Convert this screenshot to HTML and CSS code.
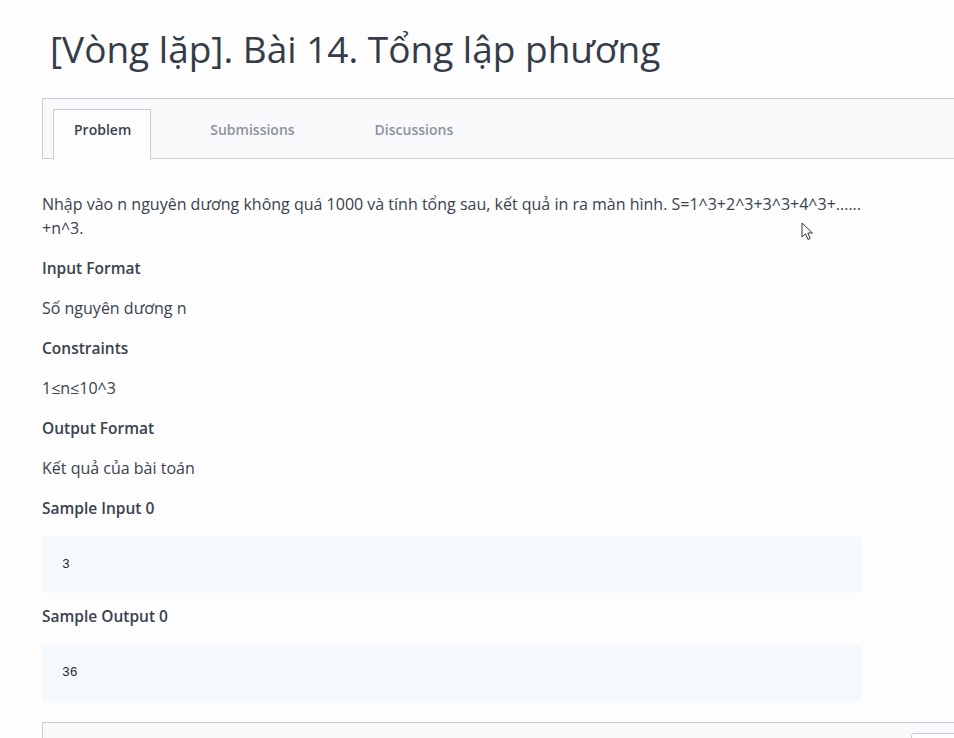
FILE: index.html
```html
<!DOCTYPE html>
<html lang="vi">
<head>
<meta charset="utf-8">
<title>Tổng lập phương</title>
<link rel="stylesheet" href="styles.css">
</head>
<body>
<div class="page">
  <h1 class="title">[Vòng lặp]. Bài 14. Tổng lập phương</h1>
  <div class="tabs">
    <div class="tab active">Problem</div>
    <div class="tab">Submissions</div>
    <div class="tab">Discussions</div>
  </div>
  <div class="content">
    <p>Nhập vào n nguyên dương không quá 1000 và tính tổng sau, kết quả in ra màn hình. S=1^3+2^3+3^3+4^3+......<br>+n^3.</p>
    <h3>Input Format</h3>
    <p>Số nguyên dương n</p>
    <h3>Constraints</h3>
    <p>1≤n≤10^3</p>
    <h3>Output Format</h3>
    <p>Kết quả của bài toán</p>
    <h3 class="sample-title">Sample Input 0</h3>
    <pre class="code">3</pre>
    <h3 class="sample-title">Sample Output 0</h3>
    <pre class="code">36</pre>
  </div>
  <div class="editor-bar">
    <div class="editor-btn"></div>
  </div>
</div>
<svg class="cursor" width="13" height="20" viewBox="0 0 13 20"><path d="M1 1 L1 15 L4.5 11.8 L7 17.5 L9.2 16.5 L6.8 11 L11.5 11 Z" fill="#fff" stroke="#333" stroke-width="1" stroke-linejoin="round"/></svg>
</body>
</html>
```

FILE: styles.css
```css
html, body {
  margin: 0;
  padding: 0;
  overflow: hidden;
  background: #fdfdfd;
}
body {
  font-family: "Open Sans", "Noto Sans", sans-serif;
  color: #39424e;
  width: 954px;
  height: 738px;
  position: relative;
}
.page {
  padding-left: 42px;
  width: 1000px;
}
.title {
  margin: 0;
  padding: 27px 0 0 8px;
  height: 98px;
  box-sizing: border-box;
  font-size: 37px;
  font-weight: 400;
  line-height: 44px;
  color: #343c47;
}
.tabs {
  display: flex;
  gap: 38px;
  height: 61px;
  box-sizing: border-box;
  border: 1px solid #c9ccd1;
  background: #f8f9fa;
  padding: 10px 0 0 10px;
}
.tab {
  padding: 0 20px;
  height: 51px;
  box-sizing: border-box;
  font-size: 14px;
  font-weight: 600;
  line-height: 40px;
  color: #8d929c;
  border: 1px solid transparent;
  border-bottom: none;
}
.tab.active {
  background: #fdfdfd;
  border-color: #c9ccd1;
  color: #39424e;
  padding: 0 19px 0 20px;
  margin-bottom: -1px;
}
.content {
  width: 830px;
  padding-top: 33px;
}
.content p {
  margin: 0 0 16px;
  font-size: 16px;
  line-height: 24px;
}
.content h3 {
  margin: 0 0 16px;
  font-size: 15.5px;
  font-weight: 600;
  line-height: 24px;
}
.content .sample-title {
  margin-bottom: 17px;
}
.code {
  margin: 0 0 11px;
  background: #f3f9fd;
  padding: 16px 20px;
  font-family: "Liberation Mono", "DejaVu Sans Mono", monospace;
  font-size: 13px;
  line-height: 24px;
  color: #1f2328;
  width: 779px;
}
.editor-bar {
  margin-top: 21px;
  height: 40px;
  border: 1px solid #c9ccd1;
  background: #f8f9fa;
  position: relative;
}
.editor-btn {
  position: absolute;
  left: 868px;
  top: 10px;
  width: 60px;
  height: 40px;
  border: 1px solid #c9ccd1;
  border-radius: 3px;
  background: #fdfdfd;
}
.cursor {
  position: absolute;
  left: 801px;
  top: 222px;
}
```
